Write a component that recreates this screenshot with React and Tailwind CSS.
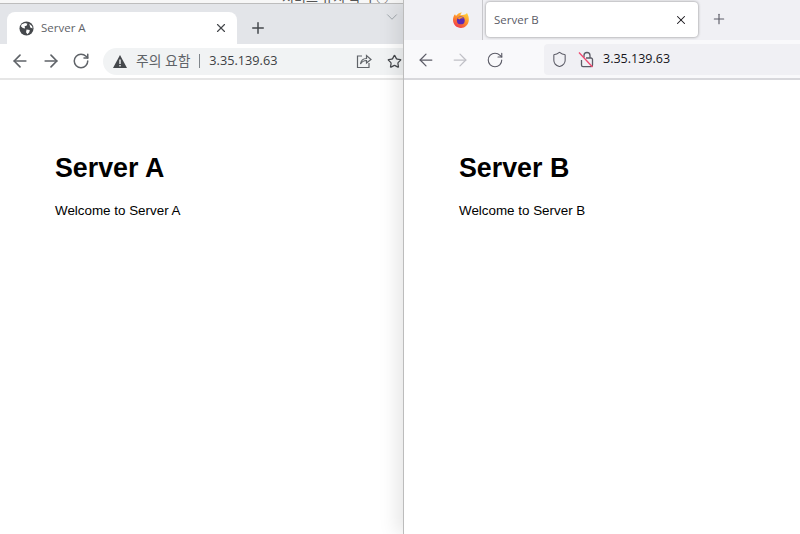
import React from 'react';
import { ArrowLeft, ArrowRight, RotateCw, X, Plus, Star, ChevronDown, Shield } from 'lucide-react';

const sans = 'font-["Liberation_Sans",Arial,sans-serif]';
const ui = 'font-["Open_Sans","Noto_Sans_CJK_KR",sans-serif]';

const PageBody = ({ name }) => (
  <div className={`flex-1 bg-white pl-[55px] pt-[73px] ${sans}`}>
    <h1 className="text-[26.8px] leading-[31px] font-bold text-black">Server {name}</h1>
    <p className="mt-[19px] text-[13.4px] leading-4 text-black">Welcome to Server {name}</p>
  </div>
);

const GlobeIcon = () => (
  <svg width="15" height="15" viewBox="0 0 16 16" className="shrink-0">
    <circle cx="8" cy="8" r="7.5" fill="#45484c" />
    <path d="M3 3.5 L6.5 2 L9 3 L8 5 L6 5.5 L6.5 8 L4 7.5 L2 5.5 Z M8 9 L11.5 9.5 L11 12 L9 14 L7.5 12 Z M11 3 L14 5.5 L14.5 8 L12 7 Z" fill="#fff" />
  </svg>
);

const ShareIcon = () => (
  <svg width="16" height="16" viewBox="0 0 16 16" fill="none" stroke="#5f6368" strokeWidth="1.2" className="shrink-0">
    <path d="M6 3 H1.5 V14.5 H13 V10" />
    <path d="M4.5 11 C5 7.5 7.5 5.5 10.5 5.5 V2.5 L15 6.5 L10.5 10 V7.5 C8 7.5 6 8.5 4.5 11 Z" />
  </svg>
);

const WarningIcon = () => (
  <svg width="14" height="13" viewBox="0 0 14 13" className="shrink-0">
    <path d="M7 0 L14 13 H0 Z" fill="#45484c" />
    <rect x="6.3" y="4.5" width="1.4" height="4.5" fill="#f1f3f4" />
    <rect x="6.3" y="10" width="1.4" height="1.4" fill="#f1f3f4" />
  </svg>
);

const FirefoxIcon = () => (
  <svg width="16" height="16" viewBox="0 0 16 16" className="shrink-0">
    <defs>
      <linearGradient id="ff" x1="0.8" y1="0" x2="0.2" y2="1">
        <stop offset="0" stopColor="#ffd43a" />
        <stop offset="0.5" stopColor="#ff8a2a" />
        <stop offset="1" stopColor="#f0304f" />
      </linearGradient>
    </defs>
    <path d="M14 1 C15.5 3.5 16 6 15.8 8.5 C15.4 12.6 12 16 8 16 C3.6 16 0 12.4 0 8 C0 5.5 0.8 3.5 2 2.2 L3 4 C4.2 2.2 6.5 0.6 9 0.5 C8 1.5 7.5 2.5 7.5 3.2 C10 2.8 12.5 3 14 1 Z" fill="url(#ff)" />
    <circle cx="7.8" cy="8.4" r="3.9" fill="#5b2bb5" />
    <path d="M4 6 C6 4.5 9.5 4.5 11 6.5 C9 6 7 6.5 6.5 7.5 Z" fill="#ff9a2e" />
  </svg>
);

const InsecureLock = () => (
  <svg width="16" height="17" viewBox="0 0 16 17" fill="none" className="shrink-0">
    <path d="M6 6.5 V4.5 C6 2.8 7.2 1.5 9 1.5 C10.8 1.5 12 2.8 12 4.5 V7" stroke="#5b5b66" strokeWidth="1.3" />
    <path d="M3.5 9 V14 C3.5 15 4.2 15.7 5 15.7 H13 C13.8 15.7 14.5 15 14.5 14 V8.5 C14.5 7.5 13.8 7 13 7 H8" stroke="#5b5b66" strokeWidth="1.3" />
    <path d="M1 1.5 L14.5 16" stroke="#f0476f" strokeWidth="1.3" />
  </svg>
);

const ChromeWindow = () => (
  <div className="flex w-[403px] shrink-0 flex-col">
    <div className="h-[3px] overflow-hidden bg-[#f7f7f7] pl-[282px]">
      <p className={`-mt-[11px] text-[13px] leading-4 text-[#555] ${ui}`}>서비스 유지 목적 ○</p>
    </div>
    <div className="h-px bg-[#bdbdbd]" />
    <div className={`flex h-10 items-end bg-[#e3e5e9] pl-[7px] ${ui}`}>
      <div className="flex h-8 w-[230px] items-center gap-[7px] rounded-t-lg bg-white pl-3 pr-[9px]">
        <GlobeIcon />
        <span className="flex-1 text-[11.5px] text-[#5f6368]">Server A</span>
        <X size={14} strokeWidth={2} className="text-[#45484c]" />
      </div>
      <div className="ml-3 flex h-full flex-1">
        <Plus size={18} strokeWidth={2} className="mb-[7px] self-end text-[#45484c]" />
        <ChevronDown size={18} strokeWidth={1.2} className="ml-[116px] mt-[4px] self-start text-[#9aa0a6]" />
      </div>
    </div>
    <div className={`flex h-[34px] items-center bg-white pl-[10px] ${ui}`}>
      <ArrowLeft size={20} strokeWidth={2} className="text-[#5f6368]" />
      <ArrowRight size={20} strokeWidth={2} className="ml-[11px] text-[#5f6368]" />
      <RotateCw size={18} strokeWidth={2} className="ml-[11px] text-[#5f6368]" />
      <div className="ml-[13px] flex h-[27px] flex-1 items-center rounded-l-full bg-[#f1f3f4] pl-[10px] text-[12.7px]">
        <WarningIcon />
        <span className="ml-[9px] text-[13.8px] text-[#5f6368]">주의 요함</span>
        <span className="mx-[9px] h-[14px] w-px bg-[#80868b]" />
        <span className="text-[#3c4043]">3.35.139.63</span>
        <span className="ml-auto flex items-center gap-[15px] pr-[1px]">
          <ShareIcon />
          <Star size={15} strokeWidth={2} className="text-[#45484c]" />
        </span>
      </div>
    </div>
    <div className="h-0.5 bg-[#e6e6e6]" />
    <PageBody name="A" />
  </div>
);

const FirefoxWindow = () => (
  <div className="relative flex min-w-0 flex-1 flex-col border-l border-[#bcbcbc] shadow-[-6px_0_18px_rgba(0,0,0,0.1)]">
    <div className={`flex h-10 items-start bg-[#f0f0f4] ${ui}`}>
      <div className="flex h-full w-[79px] items-center justify-center border-r border-[#c8c8cc] pl-9">
        <FirefoxIcon />
      </div>
      <div className="ml-[3px] mt-[2px] flex h-[35px] w-[212px] items-center justify-between rounded bg-white pl-[8px] pr-[10px] shadow-[0_0_3px_rgba(0,0,0,0.45)]">
        <span className="text-[11.5px] text-[#5b5b66]">Server B</span>
        <X size={14} strokeWidth={1.8} className="text-[#15141a]" />
      </div>
      <Plus size={16} strokeWidth={1.7} className="ml-[13px] mt-[11px] text-[#5b5b66]" />
    </div>
    <div className={`flex h-[38px] items-center bg-[#f9f9fb] pl-3 pt-px ${ui}`}>
      <ArrowLeft size={20} strokeWidth={1.5} className="text-[#5b5b66]" />
      <ArrowRight size={20} strokeWidth={1.5} className="ml-[14px] text-[#c0c0c6]" />
      <RotateCw size={18} strokeWidth={1.5} className="ml-4 text-[#5b5b66]" />
      <div className="ml-10 flex h-[31px] flex-1 items-center rounded-l bg-[#f0f0f4] pl-[7px] text-[12.5px]">
        <Shield size={17} strokeWidth={1.5} className="text-[#5b5b66]" />
        <span className="ml-[10px]"><InsecureLock /></span>
        <span className="ml-[9px] text-[#15141a]">3.35.139.63</span>
      </div>
    </div>
    <div className="h-0.5 bg-[#d8d8dc]" />
    <PageBody name="B" />
  </div>
);

export default function App() {
  return (
    <div className="flex h-[534px] w-[800px] overflow-hidden bg-white">
      <ChromeWindow />
      <FirefoxWindow />
    </div>
  );
}
